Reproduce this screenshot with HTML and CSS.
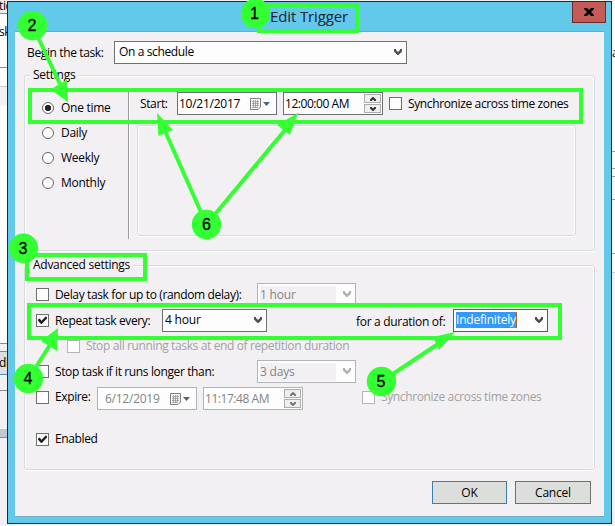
FILE: index.html
```html
<!DOCTYPE html>
<html lang="en">
<head>
<meta charset="utf-8">
<title>Edit Trigger</title>
<link rel="stylesheet" href="styles.css">
</head>
<body>
<svg class="defs" width="0" height="0" aria-hidden="true">
  <symbol id="chev" viewBox="0 0 8 7"><path d="M0 0H2V1L4 3L6 1V0H8V2.5L4.5 6H3.5L0 2.5Z"/></symbol>
  <symbol id="check" viewBox="0 0 11 11"><path d="M1 4.4L2.6 3.4L4.5 5.7L9 1.2L10 2.4V3.6L4.8 9H4L1 5.8Z"/></symbol>
  <symbol id="cal" viewBox="0 0 22 12">
    <path class="paper" d="M.5 .5H10.5V9L8 11.5H.5Z"/>
    <path class="cells" d="M2 3.5H9M2 5.5H9M2 7.5H9M2 9.5H7M3.5 2V10M5.5 2V10M7.5 2V10"/>
    <path class="drop" d="M13 4H20L16.5 8Z"/>
  </symbol>
  <symbol id="up" viewBox="0 0 6 4"><path d="M0 4V2.6L2.6 0H3.4L6 2.6V4H4.5L3 2.4L1.5 4Z"/></symbol>
</svg>
<div class="desktop">
  <div class="strip left">
    <div class="s1"><span>tic</span></div>
    <div class="s2"><span>sk</span></div>
    <div class="s3"></div>
    <div class="s4"></div>
    <div class="s5"></div>
    <div class="s6"></div>
    <div class="s7"><span>di</span></div>
    <div class="s8"></div>
    <div class="s9"></div>
    <div class="s10"></div>
  </div>
  <main class="window">
    <header class="titlebar">
      <h1>Edit Trigger</h1>
      <button class="close" aria-label="Close"><svg width="10" height="8" viewBox="0 0 10 8"><path d="M0 0H3L5 2L7 0H10V1L7 4L10 7V8H7L5 6L3 8H0V7L3 4L0 1Z"/></svg></button>
    </header>
    <div class="client">
      <div class="row begin">
        <label>Begin the task:</label>
        <div class="select wide"><span>On a schedule</span><svg><use href="#chev"/></svg></div>
      </div>
      <section class="group settings">
        <h2>Settings</h2>
        <div class="columns">
          <div class="radios">
            <label><i class="radio on"></i><span>One time</span></label>
            <label><i class="radio"></i><span>Daily</span></label>
            <label><i class="radio"></i><span>Weekly</span></label>
            <label><i class="radio"></i><span>Monthly</span></label>
          </div>
          <div class="detail">
            <div class="row start">
              <label class="start-label">Start:</label>
              <div class="date"><span>10/21/2017</span><svg><use href="#cal"/></svg></div>
              <div class="time"><span>12:00:00 AM</span><div class="spin"><b><svg><use href="#up"/></svg></b><b><svg class="flip"><use href="#up"/></svg></b></div></div>
              <i class="box"></i><label class="after sync">Synchronize across time zones</label>
            </div>
            <div class="panel"></div>
          </div>
        </div>
      </section>
      <section class="group advanced">
        <h2>Advanced settings</h2>
        <div class="row delay">
          <i class="box"></i><label class="after c257">Delay task for up to (random delay):</label>
          <div class="select w99 off"><span>1 hour</span><svg><use href="#chev"/></svg></div>
        </div>
        <div class="row repeat">
          <i class="box"><svg><use href="#check"/></svg></i><label class="after c162">Repeat task every:</label>
          <div class="select w105"><span>4 hour</span><svg><use href="#chev"/></svg></div>
          <label class="duration">for a duration of:</label>
          <div class="select w95 focus"><span><mark>Indefinitely</mark></span><svg><use href="#chev"/></svg></div>
        </div>
        <div class="row stopall off">
          <i class="box"></i><label class="after">Stop all running tasks at end of repetition duration</label>
        </div>
        <div class="row stop">
          <i class="box"></i><label class="after c257">Stop task if it runs longer than:</label>
          <div class="select w99 off"><span>3 days</span><svg><use href="#chev"/></svg></div>
        </div>
        <div class="row expire">
          <i class="box"></i><label class="after c97">Expire:</label>
          <div class="date off"><span>6/12/2019</span><svg><use href="#cal"/></svg></div>
          <div class="time off"><span>11:17:48 AM</span><div class="spin"><b><svg><use href="#up"/></svg></b><b><svg class="flip"><use href="#up"/></svg></b></div></div>
          <div class="expire-sync off"><i class="box"></i><label class="after sync">Synchronize across time zones</label></div>
        </div>
        <div class="row enabled">
          <i class="box"><svg><use href="#check"/></svg></i><label class="after">Enabled</label>
        </div>
      </section>
      <footer>
        <button class="btn default">OK</button>
        <button class="btn">Cancel</button>
      </footer>
    </div>
  </main>
  <div class="strip right">
    <div class="r1"><span>a</span></div>
    <div class="r2"></div>
    <div class="r3"></div>
    <div class="r4"></div>
    <div class="r5"></div>
    <div class="r6"></div>
    <div class="r7"></div>
  </div>
  <svg class="notes" width="615" height="526" viewBox="0 0 615 526">
    <g class="frames">
      <rect x="259" y="5" width="98" height="26"/>
      <rect x="30" y="90" width="551" height="32"/>
      <rect x="27" y="255" width="118" height="24"/>
      <rect x="29" y="305" width="531" height="33"/>
    </g>
    <g class="arrows">
      <path d="M32.500 25.500L60 84M206.500 224.500L165 131M206.500 224.500L285 130M28.500 378.500L50 345M381.500 381.500L438 344"/>
    </g>
    <g class="heads">
      <path d="M68 102L50.500 89.500L67 79.500ZM157 113L158.500 136L173 130ZM298 113L277 125L290 135ZM58 328L41 341L57 351ZM455 332L433 337L439 350Z"/>
      <circle cx="255.500" cy="13.500" r="14.700"/><circle cx="32.500" cy="25.500" r="14.700"/><circle cx="23.500" cy="248.300" r="14.700"/>
      <circle cx="28.500" cy="378.500" r="14.700"/><circle cx="381.500" cy="381.500" r="14.700"/><circle cx="206.500" cy="224.500" r="14.700"/>
    </g>
    <g class="nums">
      <text x="254.500" y="19">1</text><text x="32" y="31">2</text><text x="23" y="254">3</text>
      <text x="28" y="384">4</text><text x="381" y="387">5</text><text x="206.500" y="230">6</text>
    </g>
  </svg>
</div>
</body>
</html>
```

FILE: styles.css
```css
* { box-sizing: border-box; }
body { margin: 0; width: 615px; height: 526px; overflow: hidden; font: 12px/16px "Open Sans", sans-serif; letter-spacing: -0.37px; color: #000; }
.defs { position: absolute; }
.desktop { position: relative; display: flex; width: 615px; height: 526px; background: #f3f0f4; }
.window { width: 605px; height: 523px; margin-top: 1px; border: 1px solid #1c2b33; background: #62c9ea; flex: none; }
h1, h2 { margin: 0; font-weight: 400; }
label { white-space: nowrap; }

.titlebar { display: flex; height: 30px; align-items: flex-start; }
.titlebar h1 { flex: none; width: 564px; padding-left: 262px; font-size: 15px; line-height: 29px; letter-spacing: -0.12px; white-space: nowrap; color: #17242c; }
.close { width: 34px; height: 21px; border: 1px solid #6b2c2c; border-top: 0; padding: 0 0 1px; background: #c45b56; display: flex; align-items: center; justify-content: center; }
.close svg { fill: #000; }

.client { width: 589px; height: 484px; margin-left: 7px; padding-top: 9px; background: #f3f0f4; box-shadow: 0 -1px #6fa9c4, 0 1px #75a9bf; }
.row { display: flex; align-items: center; height: 23px; }
.begin { padding-left: 12px; }
.begin label { width: 87px; }

.select, .date, .time { display: flex; align-items: center; height: 23px; border: 1px solid #707070; background: #fdfdfd; flex: none; white-space: nowrap; }
.select { justify-content: space-between; padding: 0 4px; }
.select svg { width: 8px; height: 7px; fill: #505050; flex: none; }
.select span { margin-top: -2px; }
.wide { width: 293px; }
.w99 { width: 99px; }
.w105 { width: 105px; }
.w95 { width: 95px; }
.select.w99, .select.w105, .select.w95 { padding-left: 2px; letter-spacing: -0.2px; }
.select.off span { width: 76px; height: 18px; margin-top: 0; background: #f3f0f4; line-height: 18px; }
.focus { border-color: #356590; }
mark { display: block; height: 16px; line-height: 16px; color: #fff; background: #3399ff; border-right: 1px solid #a06830; }
.off { color: #a1a1a1; }
.select.off, .time.off, .date.off { border-color: #b0b4b8; color: #838383; }
.select.off svg { fill: #b0b0b0; }
.date { width: 100px; padding-left: 1px; justify-content: space-between; letter-spacing: -0.25px; }
.date svg { width: 22px; height: 12px; margin-right: 4px; flex: none; }
.paper { fill: #f5f5f5; stroke: #808080; }
.cells { stroke: #999; stroke-width: .8; fill: none; }
.drop { fill: #48658f; }
.date.off svg { filter: grayscale(1); }
.date.off .drop { fill: #bbb; }
.date.off { padding-left: 7px; }
.time { width: 100px; padding-left: 1px; justify-content: space-between; letter-spacing: -0.45px; }
.spin { display: grid; gap: 1px; width: 17px; height: 19px; margin-right: 1px; flex: none; }
.spin b { display: flex; align-items: center; justify-content: center; height: 9px; border: 1px solid #acacac; background: #efefef; }
.spin svg { width: 6px; height: 4px; fill: #303030; }
.flip { transform: scaleY(-1); }
.off .spin svg { fill: #777; }

.box { width: 13px; height: 13px; flex: none; border: 1px solid #707070; background: #fdfdfd; }
.box svg { display: block; width: 11px; height: 11px; fill: #212121; }
.off > .box { border-color: #b2b5ba; }
.after { margin-left: 6px; }

.group { width: 571px; margin-left: 9px; border: 1px solid #d3dde0; border-radius: 3px; box-shadow: inset 1px 1px #fff, inset -1px 0 #fff, 0 1px #fff; }
.group h2 { width: max-content; height: 16px; margin: -9px 0 0 5px; padding: 0 3px; font-size: 12px; line-height: 16px; letter-spacing: -0.27px; background: #f3f0f4; }
.settings { height: 176px; margin-top: 11px; }
.columns { display: flex; margin-top: 8px; }
.radios { width: 104px; height: 148px; padding: 4px 0 0 17px; border-right: 1px solid #9b9b9b; box-shadow: 1px 0 #fff; letter-spacing: -0.27px; }
.radios label { display: flex; height: 25px; align-items: center; }
.radio { width: 12px; height: 12px; border: 1px solid #666; border-radius: 50%; background: #fdfdfd; margin-right: 7px; }
.on { background: radial-gradient(circle, #222 0 2.8px, #fdfdfd 3.5px); }
.detail { padding-top: 1px; }
.start { padding-left: 11px; }
.start-label { width: 37px; }
.start .time { margin: 0 6px; }
.panel { width: 439px; height: 111px; margin: 10px 0 0 8px; border: 1px solid #d3dde0; border-radius: 3px; box-shadow: inset 1px 1px #fff, inset -1px 0 #fff, 0 1px #fff; }

.advanced { height: 205px; margin-top: 14px; }
.advanced .row { padding-left: 11px; }
.delay { margin-top: 10px; }
.c257 { width: 202px; }
.c162 { width: 107px; }
.c97 { width: 42px; }
.repeat { margin-top: 3px; }
.duration { margin: 3px 0 0 89px; width: 97px; letter-spacing: -0.3px; }
.advanced .stopall { height: 16px; padding-left: 42px; margin-top: 6px; }
.stop { margin-top: 6px; }
.expire { margin-top: 4px; }
.expire .time { margin-left: 6px; }
.expire > .box, .expire > label, .expire-sync { margin-top: -3px; }
.expire-sync { display: flex; align-items: center; margin-left: 59px; }
.advanced .enabled { height: 16px; margin-top: 21px; }

footer { display: flex; justify-content: flex-end; gap: 8px; margin-top: 11px; padding-right: 13px; }
.btn { width: 76px; height: 23px; padding: 0; font: inherit; letter-spacing: -0.2px; background: #dcdedb; border: 1px solid #707070; }
.default { width: 75px; border-color: #3c7fb1; }

.strip { overflow: hidden; flex: none; background: #fdfdfd; }
.strip span { display: block; white-space: nowrap; }
.left { width: 7px; background: #f3f0f4; }
.left div { border-bottom: 1px solid #8a8a8a; }
.left .s1 { height: 16px; background: #eeecef; }
.s1 span { margin: -2px 0 0 -1px; }
.s2 { height: 54px; padding-top: 10px; }
.s2 span { margin-left: -1px; }
.left .s3 { height: 19px; border-color: #ccc; }
.left .s4 { height: 19px; border: 0; background: #f3f0f4; }
.s5 { height: 238px; }
.s6 { height: 8px; background: #f3f0f4; }
.left .s7 { height: 23px; background: #dcdedf; border-color: #5b91b8; padding-top: 3px; }
.s7 span { margin-left: -1px; }
.s8 { height: 16px; background: #f3f0f4; }
.left .s9 { height: 39px; border-color: #bccac0; background: #f3f0f4; }
.s10 { height: 8px; background: #becbd0; }
.s2, .s3, .s5 { background: #fdfdfd; }
.right { width: 3px; }
.right div { border-bottom: 1px solid #999; }
.r1 { height: 152px; padding-top: 45px; }
.r2 { height: 17px; }
.r3 { height: 8px; border-bottom-color: #555; }
.r4 { height: 23px; background: #f5f5f5; }
.r5 { height: 54px; }
.right .r6 { height: 19px; border-color: #ccc; }
.right .r7 { height: 253px; border: 0; background: #f3f0f4; }

.notes { position: absolute; left: 0; top: 0; }
.frames rect { fill: none; stroke: #33ff33; stroke-width: 4; }
.arrows path { fill: none; stroke: #33ff33; stroke-width: 4; }
.heads { fill: #33ff33; }
.nums { font: 16px "Liberation Sans", sans-serif; letter-spacing: 0; text-anchor: middle; fill: #000; stroke: #000; stroke-width: .3; }
```
